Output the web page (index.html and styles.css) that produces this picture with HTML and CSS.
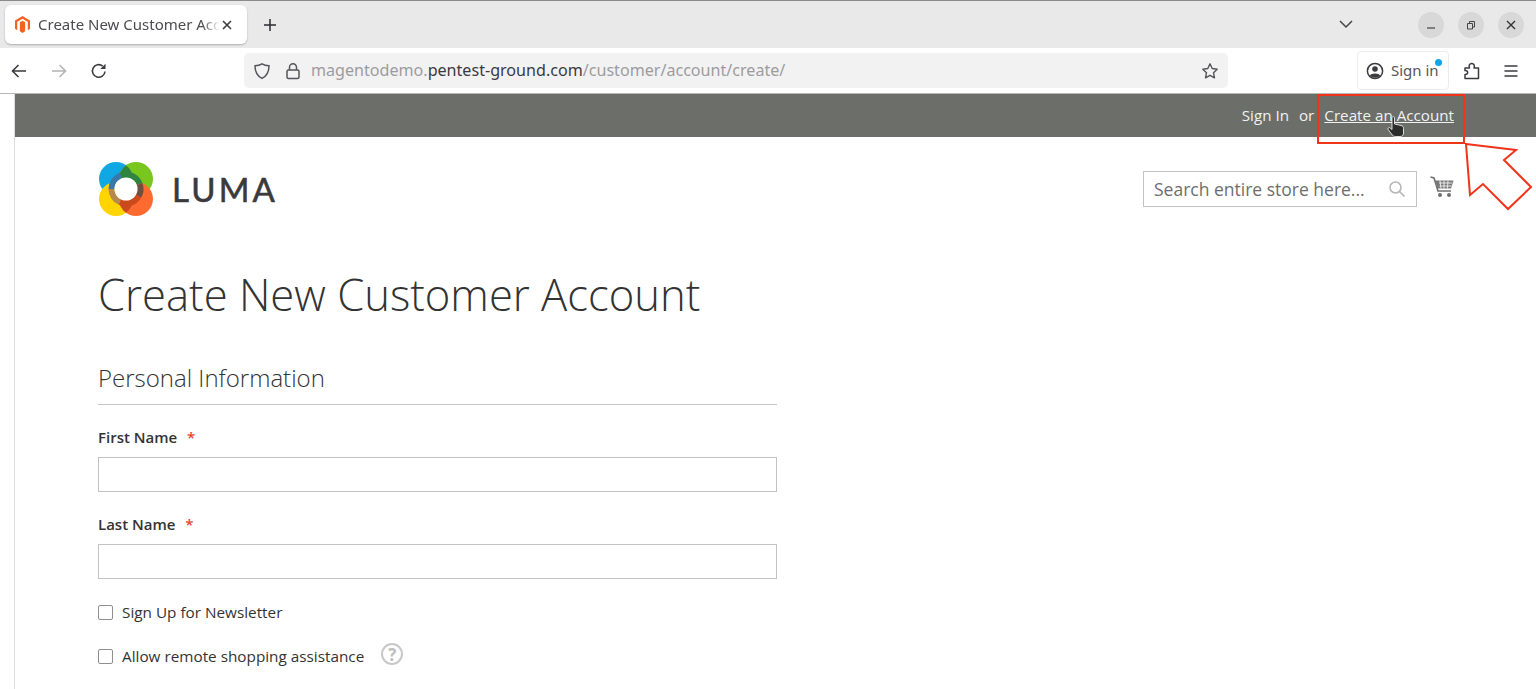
FILE: index.html
```html
<!DOCTYPE html>
<html lang="en">
<head>
    <meta charset="UTF-8">
    <title>Create New Customer Account</title>
    <link rel="stylesheet" href="styles.css">
</head>
<body>
    <div class="tabbar">
        <div class="tab">
            <svg class="favicon" viewBox="0 0 16 18"><path d="M8 0 L16 4.6 V13.6 L13.6 15 V6 L8 2.8 L2.4 6 V15 L0 13.6 V4.6 Z M7 5.6 L8 5 L9 5.6 V16 L8 18 L5.2 16.3 V6.6 L7 5.6 Z M9 5.6 L10.8 6.6 V16.3 L8 18 L9 16 Z" fill="#f26322"/></svg>
            <span class="tab-title">Create New Customer Account</span>
            <svg class="tab-close" viewBox="0 0 12 12"><path d="M2 2 L10 10 M10 2 L2 10" stroke="#3a3a3c" stroke-width="1.6" fill="none"/></svg>
        </div>
        <svg class="new-tab" viewBox="0 0 16 16"><path d="M8 2 V14 M2 8 H14" stroke="#2b2b30" stroke-width="1.5" fill="none"/></svg>
        <svg class="tab-list" viewBox="0 0 16 10"><path d="M2 2 L8 8 L14 2" stroke="#444" stroke-width="1.5" fill="none"/></svg>
        <div class="win-btns">
            <div class="win-btn"><svg viewBox="0 0 12 12"><path d="M2 9 H10" stroke="#444" stroke-width="1.2"/></svg></div>
            <div class="win-btn"><svg viewBox="0 0 12 12"><path d="M2.5 4.5 H7.5 V10 H2.5 Z M4.5 4.5 V2.5 H9.5 V8 H7.5" stroke="#444" stroke-width="1" fill="none"/></svg></div>
            <div class="win-btn"><svg viewBox="0 0 12 12"><path d="M2 2 L10 10 M10 2 L2 10" stroke="#333" stroke-width="1.4"/></svg></div>
        </div>
    </div>

    <div class="navbar">
        <svg class="nav-icon back" viewBox="0 0 18 18"><path d="M16 9 H2.5 M8.5 3 L2.5 9 L8.5 15" stroke="#3b3b40" stroke-width="1.6" fill="none"/></svg>
        <svg class="nav-icon fwd" viewBox="0 0 18 18"><path d="M2 9 H15.5 M9.5 3 L15.5 9 L9.5 15" stroke="#b4b4b8" stroke-width="1.6" fill="none"/></svg>
        <svg class="nav-icon reload" viewBox="0 0 18 18"><path d="M15 9.5 A6.3 6.3 0 1 1 12.6 4" stroke="#3b3b40" stroke-width="1.6" fill="none"/><path d="M15.5 1.8 V7 H10.3 Z" fill="#3b3b40"/></svg>
        <div class="urlbar">
            <svg class="url-icon" viewBox="0 0 18 18"><path d="M9 1.8 C11 3 13.5 3.6 16 3.8 C16 10 14 14 9 16.4 C4 14 2 10 2 3.8 C4.5 3.6 7 3 9 1.8 Z" stroke="#55555a" stroke-width="1.5" fill="none"/></svg>
            <svg class="url-icon lock" viewBox="0 0 18 18"><rect x="3" y="8" width="12" height="8.5" rx="1.5" stroke="#55555a" stroke-width="1.5" fill="none"/><path d="M5.5 8 V5.2 A3.5 3.5 0 0 1 12.5 5.2 V8" stroke="#55555a" stroke-width="1.5" fill="none"/></svg>
            <span class="url">magentodemo.<b>pentest-ground.com</b>/customer/account/create/</span>
            <svg class="url-icon star" viewBox="0 0 18 18"><path d="M9 1.8 L11.2 6.5 L16.2 7.2 L12.5 10.7 L13.5 15.8 L9 13.3 L4.5 15.8 L5.5 10.7 L1.8 7.2 L6.8 6.5 Z" stroke="#55555a" stroke-width="1.4" stroke-linejoin="round" fill="none"/></svg>
        </div>
        <div class="signin-btn">
            <svg class="nav-icon" viewBox="0 0 18 18"><circle cx="9" cy="9" r="7.6" stroke="#3b3b40" stroke-width="1.5" fill="none"/><circle cx="9" cy="7" r="2.8" fill="#3b3b40"/><path d="M3.8 13.6 C5 10.8 13 10.8 14.2 13.6 C12 16.4 6 16.4 3.8 13.6 Z" fill="#3b3b40"/></svg>
            <span class="signin-text">Sign in</span>
            <i class="dot"></i>
        </div>
        <svg class="nav-icon puzzle" viewBox="0 0 18 18"><path d="M2 6 H6.5 C5.5 3.5 6.5 1.5 8.7 1.5 C11 1.5 12 3.5 11 6 H15.5 V16.5 H2 V12.4 C5.6 12.8 5.6 8.2 2 8.6 Z" stroke="#3b3b40" stroke-width="1.5" stroke-linejoin="round" fill="none"/></svg>
        <svg class="nav-icon menu" viewBox="0 0 18 18"><path d="M2.5 4 H15.5 M2.5 9 H15.5 M2.5 14 H15.5" stroke="#3b3b40" stroke-width="1.5" fill="none"/></svg>
    </div>

    <div class="page">
        <div class="panel-bar">
            <a class="panel-link">Sign In</a>
            <span class="panel-or">or</span>
            <a class="panel-link create">Create an Account</a>
        </div>

        <header class="store-header">
            <div class="logo">
                <svg class="logo-mark" viewBox="0 0 54 54">
                    <circle cx="17" cy="17" r="17" fill="#0fa8e3"/>
                    <circle cx="37" cy="17" r="17" fill="#79c61f"/>
                    <circle cx="17" cy="37" r="17" fill="#ffd400"/>
                    <circle cx="37" cy="37" r="17" fill="#ff6a30"/>
                    <path d="M27 3.3 A17 17 0 0 1 27 30.7 A17 17 0 0 1 27 3.3 Z" fill="#2f8440"/>
                    <path d="M27 23.3 A17 17 0 0 1 27 50.7 A17 17 0 0 1 27 23.3 Z" fill="#cb4a1c"/>
                    <path d="M12.5 27 A14.5 14.5 0 0 1 22 13.4" class="ring" stroke="#3a78a8"/>
                    <path d="M22 13.4 A14.5 14.5 0 0 1 40.6 22" class="ring" stroke="#2f8440"/>
                    <path d="M40.6 22 A14.5 14.5 0 0 1 39.6 34.25" class="ring" stroke="#6d5040"/>
                    <path d="M39.6 34.25 A14.5 14.5 0 0 1 20.9 40.1" class="ring" stroke="#cb4a1c"/>
                    <path d="M20.9 40.1 A14.5 14.5 0 0 1 12.5 27" class="ring" stroke="#b58a4c"/>
                    <circle cx="27" cy="27" r="11.5" fill="#fff"/>
                </svg>
                <span class="logo-text">LUMA</span>
            </div>
            <div class="search">
                <span class="search-text">Search entire store here...</span>
                <svg class="search-icon" viewBox="0 0 18 18"><circle cx="7.5" cy="7.5" r="5.5" stroke="#b5b5b5" stroke-width="1.5" fill="none"/><path d="M11.5 11.5 L16.5 16.5" stroke="#b5b5b5" stroke-width="1.7"/></svg>
            </div>
            <svg class="cart" viewBox="0 0 24 22">
                <path d="M0.5 1 L4 2 L8 15 H21" stroke="#6f6f6f" stroke-width="1.6" fill="none"/>
                <path d="M5 4.5 H23.5 L21 12.5 H7.5 Z" fill="#7a7a7a"/>
                <path d="M9 7 H22 M9.5 10 H21.5 M10 4.5 L11 12.5 M14 4.5 V12.5 M18 4.5 L17.5 12.5" stroke="#fff" stroke-width="0.8"/>
                <circle cx="10" cy="19" r="2" fill="#6f6f6f"/><circle cx="19" cy="19" r="2" fill="#6f6f6f"/>
            </svg>
        </header>

        <main class="content">
            <h1 class="page-title">Create New Customer Account</h1>
            <form class="account-form">
                <h2 class="legend">Personal Information</h2>
                <label class="field-label">First Name <em>*</em></label>
                <div class="text-input"></div>
                <label class="field-label">Last Name <em>*</em></label>
                <div class="text-input"></div>
                <div class="check-row">
                    <span class="check"></span>
                    <span>Sign Up for Newsletter</span>
                </div>
                <div class="check-row">
                    <span class="check"></span>
                    <span>Allow remote shopping assistance</span>
                    <span class="help">?</span>
                </div>
            </form>
        </main>
    </div>

    <!-- red annotation over the screenshot -->
    <div class="note-box"></div>
    <svg class="note-arrow" viewBox="0 0 72 72"><path d="M1 1 L51 7 L39 17 L66 44 L43 66 L18 41 L5 52 Z" stroke="#f0341a" stroke-width="2" fill="#fff" stroke-linejoin="miter"/></svg>
    <svg class="hand" viewBox="0 0 18 22"><path d="M5 1.5 C5 0.5 7.5 0.5 7.5 1.5 V8 L14 9.5 C16 10 16.5 11 16.5 12.5 V17 C16.5 19.5 15 20.5 13 20.5 H8.5 C6.5 20.5 5.5 19.5 4.5 18 L1.2 13.5 C0.5 12 2.2 11 3.2 12 L5 13.5 Z" fill="#2c2c2c" stroke="#fff" stroke-width="0.8"/></svg>
</body>
</html>
```

FILE: styles.css
```css
/* Global styles */
html, body {
    height: 100%;
}

body {
    margin: 0;
    background-color: #fff;
    font-family: "Open Sans", sans-serif;
    overflow: hidden;
    position: relative;
}

/* Browser tabs */
.tabbar {
    height: 48px;
    box-sizing: border-box;
    border-top: 1px solid #8a8a8a;
    background-color: #e9e9e9;
    display: flex;
    align-items: center;
    padding-left: 5px;
}

.tab {
    width: 242px;
    height: 39px;
    box-sizing: border-box;
    background-color: #fff;
    border-radius: 6px;
    box-shadow: 0 1px 2px rgba(0, 0, 0, 0.25);
    display: flex;
    align-items: center;
    padding: 0 12px 0 10px;
}

.favicon {
    width: 15px;
    height: 17px;
    flex: none;
}

.tab-title {
    margin-left: 8px;
    margin-bottom: 2px;
    width: 182px;
    font-family: "Noto Sans", sans-serif;
    font-size: 15px;
    color: #4c4c50;
    white-space: nowrap;
    overflow: hidden;
    -webkit-mask-image: linear-gradient(to right, #000 90%, transparent);
    mask-image: linear-gradient(to right, #000 90%, transparent);
}

.tab-close {
    width: 12px;
    height: 12px;
    margin-left: 1px;
    flex: none;
}

.new-tab {
    width: 16px;
    height: 16px;
    margin-left: 15px;
    flex: none;
}

.tab-list {
    width: 16px;
    height: 10px;
    margin-left: auto;
    margin-bottom: 2px;
    flex: none;
}

.win-btns {
    display: flex;
    gap: 14px;
    margin-left: 64px;
    margin-right: 12px;
}

.win-btn {
    width: 26px;
    height: 26px;
    border-radius: 50%;
    background-color: #d8d8d8;
    display: flex;
    align-items: center;
    justify-content: center;
}

.win-btn svg {
    width: 12px;
    height: 12px;
}

/* Browser toolbar */
.navbar {
    height: 46px;
    box-sizing: border-box;
    background-color: #fff;
    border-bottom: 1px solid #b8b8b8;
    display: flex;
    align-items: center;
    padding-left: 10px;
}

.nav-icon {
    width: 18px;
    height: 18px;
    flex: none;
}

.fwd {
    margin-left: 22px;
}

.reload {
    margin-left: 22px;
}

.urlbar {
    width: 984px;
    height: 35px;
    margin-left: 136px;
    box-sizing: border-box;
    background-color: #f2f2f3;
    border-radius: 5px;
    display: flex;
    align-items: center;
    padding: 0 9px;
}

.url-icon {
    width: 18px;
    height: 18px;
    flex: none;
}

.url-icon.lock {
    margin-left: 13px;
}

.url-icon.star {
    margin-left: auto;
}

.url {
    margin-left: 9px;
    margin-bottom: 2px;
    font-family: "Noto Sans", sans-serif;
    font-size: 16.1px;
    color: #9c9ca0;
    white-space: nowrap;
}

.url b {
    font-weight: 400;
    color: #3a3a3e;
}

.signin-btn {
    width: 92px;
    height: 39px;
    margin-left: 129px;
    box-sizing: border-box;
    border: 1px solid #ececec;
    border-radius: 4px;
    display: flex;
    align-items: center;
    padding-left: 8px;
    gap: 7px;
    position: relative;
    font-family: "Noto Sans", sans-serif;
    font-size: 15px;
    color: #55555a;
}

.signin-text {
    margin-bottom: 2px;
}

.dot {
    position: absolute;
    top: 7px;
    right: 6px;
    width: 7px;
    height: 7px;
    border-radius: 50%;
    background-color: #12a5e6;
}

.puzzle {
    margin-left: 14px;
}

.menu {
    margin-left: 21px;
}

/* Store page */
.page {
    margin-left: 14px;
    border-left: 1px solid #dcdcdc;
    height: 595px;
}

.panel-bar {
    height: 43px;
    box-sizing: border-box;
    padding-bottom: 1px;
    background-color: #6b6e69;
    display: flex;
    align-items: center;
    justify-content: flex-end;
    padding-right: 82px;
    font-size: 15.2px;
    color: #f1f1f1;
}

.panel-link.create {
    text-decoration: underline;
}

.panel-or {
    margin: 0 10px;
}

.store-header {
    height: 103px;
    display: flex;
    align-items: center;
    padding: 0 82px 0 84px;
}

.logo {
    display: flex;
    align-items: center;
    margin-right: auto;
}

.logo-mark {
    width: 54px;
    height: 54px;
}

.ring {
    fill: none;
    stroke-width: 6;
}

.logo-text {
    margin-left: 19px;
    font-family: "Lato", sans-serif;
    font-size: 33px;
    font-weight: 400;
    letter-spacing: 3.2px;
    -webkit-text-stroke: 0.6px #3a3a3c;
    color: #3a3a3c;
}

.search {
    width: 274px;
    height: 36px;
    box-sizing: border-box;
    border: 1px solid #c2c2c2;
    display: flex;
    align-items: center;
    justify-content: space-between;
    padding: 0 10px;
    font-size: 17.5px;
    color: #6e6e6e;
}

.search-icon {
    width: 18px;
    height: 18px;
}

.cart {
    width: 24px;
    height: 22px;
    margin-left: 13px;
    margin-bottom: 4px;
}

.content {
    padding-left: 83px;
}

.page-title {
    margin: 24px 0 0;
    font-size: 43.6px;
    font-weight: 300;
    line-height: 60px;
    color: #333;
}

.account-form {
    width: 679px;
    display: flex;
    flex-direction: column;
    margin-top: 37px;
}

.legend {
    margin: 0;
    font-size: 24px;
    font-weight: 300;
    line-height: 34px;
    padding-bottom: 9px;
    border-bottom: 1px solid #c6c6c6;
    color: #333;
}

.field-label {
    margin-top: 22px;
    margin-bottom: 10px;
    font-size: 15px;
    font-weight: 600;
    line-height: 20px;
    color: #333;
}

.field-label em {
    margin-left: 6px;
    font-style: normal;
    color: #e8452c;
}

.text-input {
    height: 35px;
    box-sizing: border-box;
    border: 1px solid #c2c2c2;
    background-color: #fff;
}

.check-row {
    display: flex;
    align-items: center;
    gap: 9px;
    margin-top: 22px;
    height: 22px;
    font-size: 15.3px;
    color: #333;
}

.check {
    width: 15px;
    height: 15px;
    box-sizing: border-box;
    border: 1px solid #8f8f8f;
    border-radius: 2px;
    background-color: #fff;
}

.help {
    width: 22px;
    height: 22px;
    box-sizing: border-box;
    margin-left: 8px;
    margin-bottom: 4px;
    border: 2px solid #c8c8c8;
    border-radius: 50%;
    display: flex;
    align-items: center;
    justify-content: center;
    font-size: 17px;
    font-weight: 700;
    color: #bdbdbd;
}

/* Red annotation and mouse pointer, drawn over the page */
.note-box {
    position: absolute;
    left: 1317px;
    top: 94px;
    width: 148px;
    height: 50px;
    box-sizing: border-box;
    border: 2px solid #f0341a;
}

.note-arrow {
    position: absolute;
    left: 1465px;
    top: 143px;
    width: 72px;
    height: 72px;
}

.hand {
    position: absolute;
    left: 1387px;
    top: 116px;
    width: 18px;
    height: 22px;
}
```
